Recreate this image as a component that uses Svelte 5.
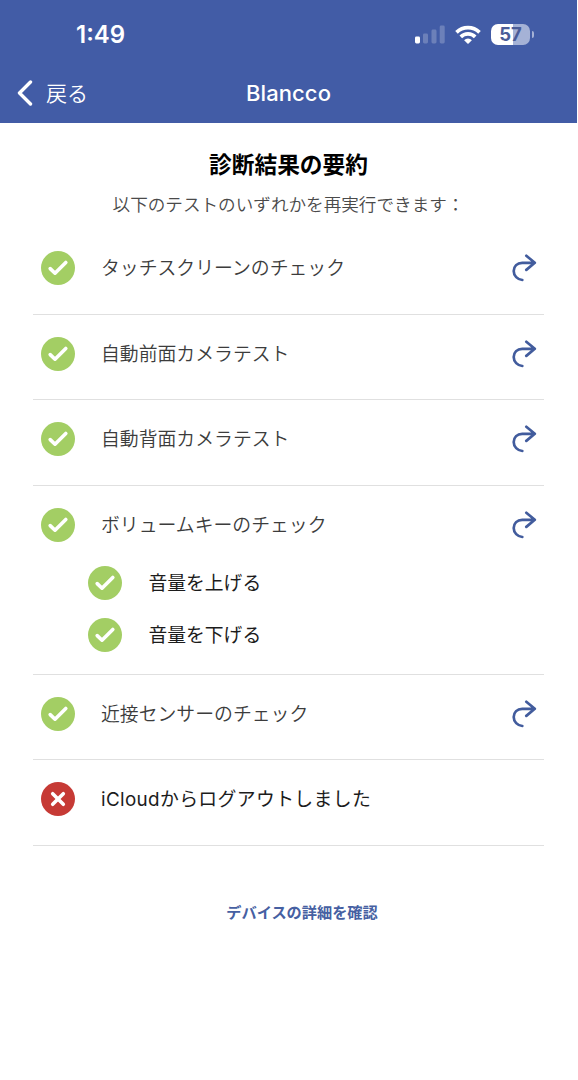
<script lang="ts">
  type Test = {
    name: string;
    passed: boolean;
    retry: boolean;
    steps?: string[];
  };

  const tests: Test[] = [
    { name: 'タッチスクリーンのチェック', passed: true, retry: true },
    { name: '自動前面カメラテスト', passed: true, retry: true },
    { name: '自動背面カメラテスト', passed: true, retry: true },
    {
      name: 'ボリュームキーのチェック',
      passed: true,
      retry: true,
      steps: ['音量を上げる', '音量を下げる'],
    },
    { name: '近接センサーのチェック', passed: true, retry: true },
    { name: 'iCloudからログアウトしました', passed: false, retry: false },
  ];
</script>

{#snippet status(passed: boolean)}
  <svg class="status" width="34" height="34" viewBox="0 0 34 34">
    <circle cx="17" cy="17" r="17" fill={passed ? '#a3ce64' : '#c63a35'} />
    {#if passed}
      <path d="M9.2 17.6l4.8 4.6L24.8 11.4" />
    {:else}
      <path d="M11.7 11.7l10.6 10.6M22.3 11.7L11.7 22.3" />
    {/if}
  </svg>
{/snippet}

<div class="screen">
  <header>
    <div class="status-bar">
      <span class="time">1:49</span>
      <div class="indicators">
        <svg width="30" height="19" viewBox="0 0 30 19" fill="#fff">
          <rect x="0" y="11.5" width="5" height="7" rx="1.4" />
          <g opacity="0.22">
            <rect x="8" y="8.5" width="5" height="10" rx="1.4" />
            <rect x="16.5" y="4.5" width="5" height="14" rx="1.4" />
            <rect x="24.7" y="0.5" width="5" height="18" rx="1.4" />
          </g>
        </svg>
        <svg width="26" height="19" viewBox="0 0 26 19" fill="none" stroke="#fff" stroke-width="3.7">
          <path d="M1.5 7.3a16.5 16.5 0 0 1 23 0" />
          <path d="M5.8 11.9a10.2 10.2 0 0 1 14.4 0" />
          <path d="M13 19l-3.9-3.8a5.5 5.5 0 0 1 7.8 0z" fill="#fff" stroke="none" />
        </svg>
        <div class="battery">
          <span class="level">57</span>
          <span class="cap"></span>
        </div>
      </div>
    </div>
    <nav>
      <button class="back">
        <svg width="16" height="26" viewBox="0 0 16 26">
          <path d="M13.5 2L2.5 13l11 11" />
        </svg>
        <span>戻る</span>
      </button>
      <span class="app-name">Blancco</span>
    </nav>
  </header>

  <main>
    <h1>診断結果の要約</h1>
    <p class="hint">以下のテストのいずれかを再実行できます：</p>

    <ul class="tests">
      {#each tests as test}
        <li>
          <div class="row">
            {@render status(test.passed)}
            <span class="name" class:failed={!test.passed}>{test.name}</span>
            {#if test.retry}
              <button class="retry" aria-label={test.name}>
                <svg width="25" height="28" viewBox="0 0 25 28">
                  <path d="M10.3 26C5.5 25.6 1.7 21.8 1.7 17.1C1.7 12.2 5.2 8.8 10.2 8.8H22.5M14.3 1.8L22.8 8.8L14.3 15.9" />
                </svg>
              </button>
            {/if}
          </div>
          {#if test.steps}
            <div class="steps">
              {#each test.steps as step}
                <div class="step">
                  {@render status(true)}
                  <span>{step}</span>
                </div>
              {/each}
            </div>
          {/if}
        </li>
      {/each}
    </ul>

    <button class="details">デバイスの詳細を確認</button>
  </main>
</div>

<style>
  :global(body) {
    margin: 0;
    background-color: #fff;
  }

  .screen {
    width: 577px;
    min-height: 1080px;
    font-family: Inter, 'Noto Sans CJK JP', sans-serif;
    color: #1c1c1c;
  }

  button {
    padding: 0;
    border: none;
    background: none;
    font-family: inherit;
    cursor: pointer;
  }

  svg {
    display: block;
    flex-shrink: 0;
  }

  header {
    height: 122.5px;
    background-color: #425ca6;
    color: #fff;
  }

  .status-bar {
    display: flex;
    align-items: center;
    justify-content: space-between;
    height: 69px;
    padding: 0 43px 0 76px;
  }

  .time {
    font-size: 24px;
    font-weight: 600;
  }

  .indicators {
    display: flex;
    align-items: center;
    gap: 10px;
  }

  .battery {
    display: flex;
    align-items: center;
    gap: 1.5px;
  }

  .level {
    width: 39px;
    height: 21px;
    border-radius: 7px;
    background: linear-gradient(to right, #fff 57%, #a5b2d6 57%);
    color: #4a5c98;
    font-size: 18.5px;
    font-weight: 700;
    line-height: 21px;
    text-align: center;
  }

  .cap {
    width: 2.5px;
    height: 7px;
    border-radius: 0 3px 3px 0;
    background-color: #a5b2d6;
  }

  nav {
    display: grid;
    grid-template-columns: 1fr auto 1fr;
    align-items: center;
    height: 48px;
    padding: 0 17px;
  }

  .back {
    display: flex;
    align-items: center;
    gap: 13px;
    color: #fff;
    font-size: 21px;
    font-weight: 350;
    line-height: 30px;
  }

  .back span {
    padding-top: 2px;
  }

  .back path {
    fill: none;
    stroke: #fff;
    stroke-width: 3.4;
    stroke-linecap: round;
    stroke-linejoin: round;
  }

  .app-name {
    font-size: 22px;
    font-weight: 500;
    letter-spacing: 0.1px;
  }

  main {
    display: flex;
    flex-direction: column;
    align-items: center;
  }

  h1 {
    margin: 26px 0 0;
    color: #000;
    font-size: 22.7px;
    font-weight: 700;
    line-height: 32px;
  }

  .hint {
    margin: 11px 0 0;
    color: #4a4a4a;
    font-size: 17.6px;
    font-weight: 350;
    line-height: 26px;
  }

  .tests {
    width: 511px;
    margin: 11.5px 0 0;
    padding: 0;
    list-style: none;
  }

  li {
    box-sizing: border-box;
    min-height: 85.5px;
    padding-top: 22px;
    border-bottom: 1px solid #e0e0e0;
  }

  .row {
    display: flex;
    align-items: center;
    height: 34px;
    padding: 0 7.5px;
  }

  .status path {
    fill: none;
    stroke: #fff;
    stroke-width: 3.6;
    stroke-linecap: round;
    stroke-linejoin: round;
  }

  .name {
    flex: 1;
    margin-left: 26.5px;
    padding-top: 2px;
    color: #3c3c3c;
    font-size: 18.85px;
    font-weight: 350;
    line-height: 28px;
  }

  .name.failed {
    color: #1c1c1c;
    font-weight: 400;
    letter-spacing: 0.35px;
  }

  .retry path {
    fill: none;
    stroke: #425c9d;
    stroke-width: 2.7;
    stroke-linecap: round;
    stroke-linejoin: round;
  }

  .steps {
    display: flex;
    flex-direction: column;
    gap: 18px;
    padding: 24px 0 22px 54.5px;
  }

  .step {
    display: flex;
    align-items: center;
    gap: 27px;
    height: 34px;
    font-size: 18.8px;
    line-height: 28px;
  }

  .step span {
    padding-top: 2px;
  }

  .details {
    margin: 55px 0 0 27px;
    color: #4660a2;
    font-size: 15.2px;
    font-weight: 700;
    line-height: 23px;
  }
</style>
